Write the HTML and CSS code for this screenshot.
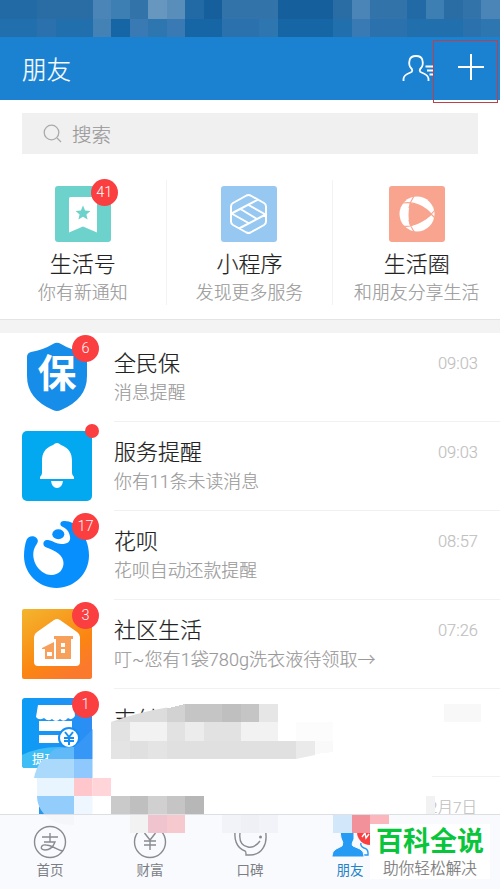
FILE: index.html
```html
<!DOCTYPE html>
<html lang="zh-CN">
<head>
<meta charset="utf-8">
<title>朋友</title>
<link rel="stylesheet" href="styles.css">
</head>
<body>
<main class="phone">
  <div class="status">
    <i class="c1"></i><i class="c1"></i><i class="c2"></i><i class="c2"></i><i class="c2"></i><i class="c5"></i><i class="c4"></i><i class="c3"></i><i class="c7"></i><i class="c6"></i><i class="c1"></i><i class="c0"></i><i class="c3"></i><i class="c3"></i><i class="c3"></i><i class="c0"></i><i class="c0"></i><i class="c0"></i><i class="c2"></i><i class="c5"></i><i class="c3"></i><i class="c3"></i><i class="c1"></i><i class="c4"></i><i class="c2"></i><i class="c3"></i><i class="c5"></i>
    <i class="d1"></i><i class="d1"></i><i class="d2"></i><i class="d1"></i><i class="d1"></i><i class="d5"></i><i class="d0"></i><i class="d4"></i><i class="d3"></i><i class="d4"></i><i class="d0"></i><i class="d0"></i><i class="d2"></i><i class="d2"></i><i class="d3"></i><i class="d0"></i><i class="d0"></i><i class="d0"></i><i class="d1"></i><i class="d4"></i><i class="d2"></i><i class="d2"></i><i class="d1"></i><i class="d1"></i><i class="d1"></i><i class="d2"></i><i class="d3"></i>
  </div>
  <header class="header">
    <h1>朋友</h1>
    <svg class="contacts" viewBox="0 0 32 30"><path d="M1.500 27v-2c0-3.500 3-5 7-6.500 2.500-1 2-3 .5-4.500C7 12 7 9 7.500 6.500 8 3.500 10.500 2 14 2s6 1.500 6.500 4.500C21 9 21 12 19 14c-1.500 1.500-2 3.500.5 4.500 4 1.500 7 3 7 6.500v2M23.500 12.500H32M25 16.500h7M27.500 20.500H32"/></svg>
    <div class="add"><svg viewBox="0 0 26 26"><path d="M13 0v26M0 13h26"/></svg></div>
  </header>
  <div class="search">
    <svg viewBox="0 0 20 20"><circle cx="8.500" cy="8.500" r="7.300"/><path d="m14 14 4 4"/></svg><span>搜索</span>
  </div>
  <section class="services">
    <div class="service">
      <div class="tile teal"><svg viewBox="0 0 56 56"><path fill="#fff" d="M15.500 11h25a1.500 1.500 0 0 1 1.500 1.500v34L28 40.500 14 46.500v-34A1.500 1.500 0 0 1 15.500 11z"/><path fill="#6dd2cc" d="m28 19.500 2.100 5 5.300.4-4 3.500 1.200 5.200-4.600-2.800-4.600 2.800 1.200-5.200-4-3.500 5.300-.4z"/></svg><b class="badge">41</b></div>
      <h2>生活号</h2><p>你有新通知</p>
    </div>
    <div class="service">
      <div class="tile sky"><svg viewBox="0 0 56 56" fill="none" stroke="#fff" stroke-width="2" stroke-linejoin="round"><path d="M25.500 9.500q2-1 4 0l13.500 7.500q2 1.200 2 3.500v15q0 2.300-2 3.500l-13.500 7.500q-2 1-4 0L12 39q-2-1.200-2-3.500v-15q0-2.300 2-3.500zM37 13.500 10.500 27.500l17 9.500M18 42.500 44.500 28.500l-17-9.500M19.500 23 36 33"/></svg></div>
      <h2>小程序</h2><p>发现更多服务</p>
    </div>
    <div class="service">
      <div class="tile coral"><svg viewBox="0 0 56 56"><circle cx="28" cy="28" r="17.500" fill="#fff"/><path fill="#f8a48f" d="M21 17q12 1 22 11-9 9-22 12-3-11 0-23z"/><path d="M25 10q-4 6-5 12M14 17q13-2 24 7l8 8M46 24q-9 12-25 16-5 1-8-.500M26 47q-5-7-6-13" fill="none" stroke="#f8a48f" stroke-width="1.200"/></svg></div>
      <h2>生活圈</h2><p>和朋友分享生活</p>
    </div>
  </section>
  <section class="list">
    <article class="row">
      <div class="icon"><svg viewBox="0 0 70 70"><path fill="#168de9" d="M31 2q4-2.500 8 0 10 6 22 8 4 1 4 5v19q0 23-26 34-4 2-8 0Q5 57 5 34V15q0-4 4-5 12-2 22-8z"/></svg><span class="bao">保</span><b class="badge">6</b></div>
      <div class="body"><div><h3>全民保</h3><p>消息提醒</p></div><time>09:03</time></div>
    </article>
    <article class="row">
      <div class="icon"><svg viewBox="0 0 70 70"><rect width="70" height="70" rx="5" fill="#02a9f1"/><path fill="#fff" d="M31 14q4-4 8 0c8 3 11 8 11 16v12q0 2 2 4v2H18v-2q2-2 2-4V30c0-8 3-13 11-16zM29 50h12q-1 7-6 7t-6-7z"/></svg><b class="badge dot"></b></div>
      <div class="body"><div><h3>服务提醒</h3><p>你有11条未读消息</p></div><time>09:03</time></div>
    </article>
    <article class="row">
      <div class="icon"><svg viewBox="0 0 70 70"><path fill="#078ffd" d="M4.500 20C6 16 11 15 14 17.500s2 5-.5 8.500c-3 5-3 12 0 18s9 11 16 11 12-5 12-12c0-8-8-12-17-15.500-5-2-3.500-8.500 1.500-7.500 6 1 8 4 13.500 4 6 0 9.500-2.500 8.500-7.500-1-6-4-8-8-10-3-2-1.500-6 2.500-5.500 6 0 11 3 14 7C63 15 67 25 67 35.500 67 54 52 68 34.500 68S2 54 2 36c0-6 1-12 2.500-16z"/><ellipse cx="36.300" cy="14.300" rx="6" ry="5" fill="#078ffd"/></svg><b class="badge">17</b></div>
      <div class="body"><div><h3>花呗</h3><p>花呗自动还款提醒</p></div><time>08:57</time></div>
    </article>
    <article class="row">
      <div class="icon"><svg viewBox="0 0 70 70"><defs><linearGradient id="orange" x1="0" y1="0" x2=".6" y2="1"><stop stop-color="#f3b62d"/><stop offset=".7" stop-color="#fb8512"/><stop offset="1" stop-color="#fb792d"/></linearGradient></defs><rect width="70" height="70" rx="2" fill="url(#orange)"/><path fill="#fff" d="M32 11q3-2 6 0l17 12q3 2 3 5v25q0 4-4 4H16q-4 0-4-4V28q0-3 3-5z"/><path fill="#f6a05c" d="M32 27h19v3h-2v20H34V30h-2zM20 39l12-6v17h-9V40h-3z"/><path fill="#fff" d="M39 34h4v4h-4zM39 40h4v4h-4zM25 43h5v4h-5z"/></svg><b class="badge">3</b></div>
      <div class="body"><div><h3>社区生活</h3><p class="wide">叮~您有1袋780g洗衣液待领取→</p></div><time>07:26</time></div>
    </article>
    <article class="row">
      <div class="icon"><svg viewBox="0 0 70 70"><defs><linearGradient id="blue"><stop stop-color="#0a9cf5"/><stop offset="1" stop-color="#2d8df5"/></linearGradient></defs><rect width="70" height="70" rx="3" fill="url(#blue)"/><path fill="#40bdf5" d="M0 57Q22 46 52 50L26 70H3q-3 0-3-3z"/><path fill="#fff" d="M16 7h36l1 11q-3 5-7 2-4 5-8 1-4 4-8 0-4 3-8-1-5 3-8-1zM17 23h33v10H17zM17 37h22v8H17z"/><circle cx="47" cy="40" r="10" fill="#fff" stroke="#168ff5" stroke-width="2"/><path d="m43 34 4 5 4-5M42 40h10M42 43h10M47 39v8" fill="none" stroke="#168ff5" stroke-width="2"/></svg><span class="cash">提现</span><b class="badge">1</b></div>
      <div class="body"><div><h3>支付</h3></div></div>
    </article>
    <div class="last"><time>2月7日</time></div>
  </section>
  <nav class="tabs">
    <div class="tab"><svg viewBox="0 0 34 34"><circle cx="17" cy="17" r="15.500"/><path d="M9 12h16M17 8v9M11 17h11q-3 8-10 8c-6 0-4-6 1-5 6 0 11 5 17 6"/></svg><span>首页</span></div>
    <div class="tab"><svg viewBox="0 0 34 34"><circle cx="17" cy="17" r="15.500"/><path d="m11.500 8 5.500 7 5.500-7M11 16h12M11 20h12M17 15v10"/></svg><span>财富</span></div>
    <div class="tab"><svg viewBox="0 0 34 34"><path d="M2.500 4c-2 10 1 19 9.500 22q1 0 1 4h4c12 0 18-11 15.500-24M7 8c-1 8 2 13 8 14 5 1 9-2 12-6"/><circle cx="27.500" cy="12" r=".8"/></svg><span>口碑</span></div>
    <div class="tab active"><svg viewBox="0 0 40 34"><path class="line" d="M31 18q-1 3 3 5 4 1 4 5v2h-4"/><circle class="red" cx="40" cy="7" r="13"/><path class="slash" d="m32 12 3-4 1 5 3-4"/><path class="fill" d="M10 6h14v8q-3 6-1 7l7 3q4 2 4 7v1H2v-1q0-5 4-7l6-3q2-3-1-8z"/></svg><span>朋友</span></div>
    <div class="tab"></div>
  </nav>
  <svg class="mosaic" viewBox="0 0 500 140">
    <g shape-rendering="crispEdges">
      <path fill="#d2d2d2" d="M167 8.400 185 4v18h-18z"/>
      <path fill="#c5c5c5" d="M185 4h74v18h-74z"/><path fill="#bfbfbf" d="M222 4h19v18h-19z"/><path fill="#e6e6e6" d="M259 4h19v18h-19z"/>
      <path fill="#e2e2e2" d="M111 22h148v19H111z"/><path fill="#f2f2f2" d="M130 22h37v19h-37zM241 22h37v19h-37z"/><path fill="#ececec" d="M185 22h19v19h-19z"/>
      <path fill="#fcfcfc" d="M296 22h37v19h-37z"/>
      <path fill="#e0e0e0" d="M111 41h185v18H111z"/><path fill="#e4e4e4" d="M111 41h19v18h-19zM148 41h19v18h-19z"/>
      <path fill="#f9f9f9" d="M315 41h18v11l-18 2z"/>
      <path fill="#f8f8f8" d="M444 4h37v18h-37z"/>
      <path fill="#fff" d="M93 59h339v55H93z"/>
      <path fill="#cacaca" d="M111 96h19v18h-19z"/><path fill="#bfbfbf" d="M130 96h18v18h-18z"/><path fill="#d0d0d0" d="M148 96h19v18h-19z"/><path fill="#c5c5c5" d="M167 96h18v18h-18z"/><path fill="#b7b7b7" d="M185 96h19v18h-19z"/>
      <path fill="#f2f2f2" d="M426 96h9v18h-9zM130 115h18v18h-18z"/>
      <path fill="#efc4cf" d="M148 115h19v18h-19z"/><path fill="#f6c9cf" d="M167 115h18v18h-18z"/>
      <path fill="#f2f3f8" d="M222 115h56v18h-56z"/><path fill="#eef0f6" d="M241 115h18v18h-18z"/>
      <path fill="#d3e7fb" d="M333 115h19v18h-19z"/><path fill="#f3919b" d="M352 115h18v18h-18z"/><path fill="#fbb7bc" d="M370 115h19v18h-19z"/>
    </g>
    <path fill="#dcdcdc" d="M111 22q28-10 56-14.500V22z"/><path fill="#eaeaea" d="M296 41h19v14l-19 4z"/>
    <path fill="#5fbaf7" d="M48 59q1-7 7-10 8-2 19-2v12z"/><path fill="#3697f6" d="M74 47q10-8 18.500-18v30H74z"/>
    <path fill="#abd9fb" d="M43 59h31v19H34q2-11 9-19z"/><path fill="#8fc8fc" d="M74 59h18.500v19H74z"/>
    <path fill="#e8f5ff" d="M37 78h37v18H37z"/><path fill="#ffc6cb" d="M74 78h18.500v18H74z"/><path fill="#ffd5d9" d="M92.500 78H111v18H92.500z"/>
    <path fill="#2a97e8" d="M39 107h8v7h-8z"/><path fill="#92cdfb" d="M37 96h37v18H44q-7-8-7-18z"/><path fill="#eef6ff" d="M74 96h18.500v18H74z"/>
    <path fill="#f5f6fa" d="M44 115h30v10q-20 0-30-10z"/>
  </svg>
  <div class="brand"><strong>百科全说</strong><span>助你轻松解决</span></div>
</main>
</body>
</html>
```
FILE: styles.css
```css
*{box-sizing:border-box;margin:0;padding:0}
body{font-family:Roboto,"Noto Sans CJK SC",sans-serif;font-weight:300;background:#fff;color:#222}
.phone{width:500px;height:889px;overflow:hidden;position:relative;display:flex;flex-direction:column}
.status{height:37px;display:grid;grid-template-columns:repeat(27,1fr);grid-template-rows:1fr 1fr;background:#2b6ea6}
.c0{background:#155f9c}.c1{background:#226aa5}.c2{background:#2a6da4}.c3{background:#3274a9}.c4{background:#3d7fb3}.c5{background:#4b85b7}.c6{background:#5a8eba}.c7{background:#6797bf}
.d0{background:#1666a6}.d1{background:#226fad}.d2{background:#2a71ad}.d3{background:#2e76b0}.d4{background:#397ab4}.d5{background:#4482b6}
.header{height:63px;background:#1b82d2;color:#fff;display:flex;align-items:center;padding-left:22px;position:relative;z-index:1}
h1{font-size:24.500px;font-weight:300;flex:1;-webkit-text-stroke:.2px #fff}
.contacts{width:32px;height:30px;fill:none;stroke:#fff;stroke-width:1.800}
.add{width:65px;height:63px;border:1.500px solid #c03d4a;display:flex;align-items:center;justify-content:center;margin:5px 2px 0 -1px;padding-left:10px;padding-bottom:8px}
.add svg{width:26px;height:26px;stroke:#fff;stroke-width:2}
.search{margin:13px 22px 0;height:41px;background:#f0f0f0;display:flex;align-items:center;gap:9px;padding-left:21px;color:#999;font-size:19.500px;-webkit-text-stroke:.2px #999}
.search svg{width:20px;height:20px;fill:none;stroke:#aaa;stroke-width:1.300}
.services{height:166px;padding-top:26px;display:grid;grid-template-columns:repeat(3,1fr);border-bottom:1px solid #e4e4e4}
.service{height:125px;display:flex;flex-direction:column;align-items:center;padding-top:6px;border-right:1px solid #f3f3f3;white-space:nowrap}
.service:last-child{border:0}
.tile{width:56px;height:56px;border-radius:3px;position:relative}
.tile svg,.icon svg{display:block;width:100%;height:100%}
.teal{background:#6dd2cc}.sky{background:#96c8f2}.coral{background:#f8a48f}
.badge{position:absolute;right:-7px;top:-7px;width:27px;height:27px;border-radius:50%;background:#fb3e40;color:#fff;font:300 14.500px/27px Roboto,sans-serif;text-align:center}
h2,h3{font-size:22px;line-height:32px;font-weight:300;-webkit-text-stroke:.2px #222}
h2{margin-top:7px}
p{font-size:17.900px;line-height:26px;color:#999;white-space:nowrap;-webkit-text-stroke:.15px #999}
.wide{font-size:18.100px}
.service p{line-height:24px}
.list{border-top:13px solid #f3f3f3;flex:1;min-height:0;overflow:hidden}
.row{height:88.900px;display:flex;padding-left:22px;gap:22px}
.icon{width:70px;height:70px;margin-top:9px;position:relative}
.body{flex:1;display:flex;justify-content:space-between;padding:15px 22px 0 0;border-bottom:1px solid #f1f1f1}
time{font-size:16.500px;line-height:32px;color:#c0c0c0;-webkit-text-stroke:.15px #c0c0c0}
.dot{width:14px;height:14px}
.bao{position:absolute;inset:0;text-align:center;color:#fff;font-size:39px;line-height:65px;font-weight:700}
.cash{position:absolute;left:10px;bottom:0;color:#fff;font-size:12.500px;font-weight:500}
.last{display:flex;justify-content:flex-end;padding:25px 23px 0 0}
.last time{font-size:15.500px;line-height:12px}
.tabs{height:75px;border-top:1px solid #dedfe3;background:#f9fafe;display:grid;grid-template-columns:repeat(5,1fr)}
.tab{display:flex;flex-direction:column;align-items:center;padding-top:10px;color:#7b7e83;font-size:13.500px;line-height:22px;font-weight:400}
.tab svg{width:34px;height:34px;fill:none;stroke:#898b90;stroke-width:1.400}
.tab.active{color:#2482c7}
.tab.active svg{width:40px}
.tab .fill{fill:#259bf3;stroke:#f9fafe;stroke-width:1}
.tab .line{stroke:#259bf3}
.tab .red{fill:#fb3e40;stroke:none}
.tab .slash{stroke:#fff}
.mosaic{position:absolute;left:0;top:700px;width:500px;height:140px}
.brand{position:absolute;left:370px;top:824px;width:120px;height:55px;background:#fff;color:#777;text-align:center;line-height:1;white-space:nowrap;font-size:15.700px}
.brand strong{display:block;color:#08c53b;font-size:27px;line-height:37px;margin-bottom:-2px;font-weight:700}
.brand span{display:block;line-height:20px;-webkit-text-stroke:.2px #777}
```
